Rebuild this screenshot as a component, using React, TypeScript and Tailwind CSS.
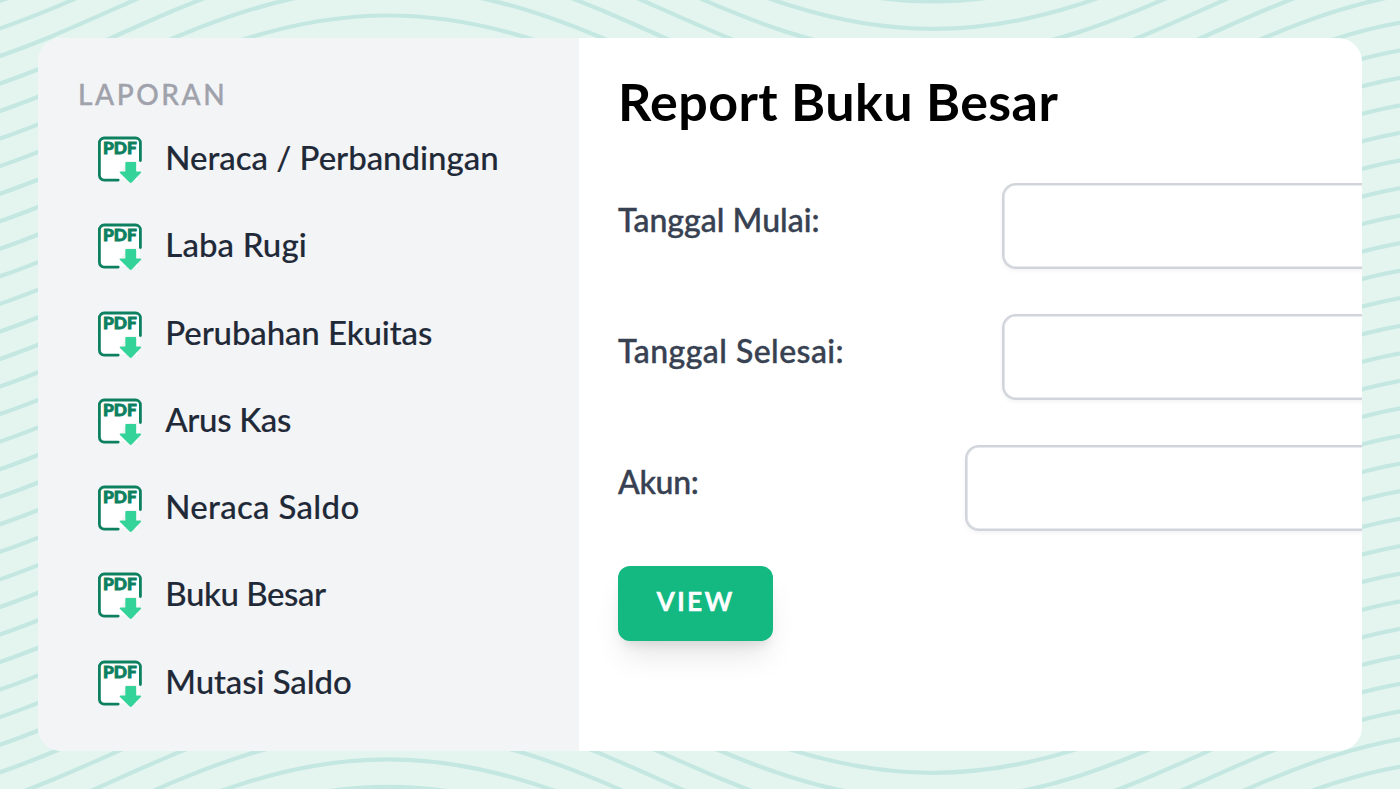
import React from 'react';

const LINE_GAP = 27.55;
const WAVE =
  'M-157 166.7 C50 166.7 181 15.5 388 15.5 S726 166.7 933 166.7 S1271 15.5 1478 15.5';

function Waves() {
  const rows = Array.from({ length: 36 }, (_, i) => i - 6);
  return (
    <svg
      className="absolute inset-0 h-full w-full"
      viewBox="0 0 1400 789"
      fill="none"
      stroke="#c4e8e1"
      strokeWidth="4.2"
      aria-hidden="true"
    >
      {rows.map((row) => (
        <path key={row} d={WAVE} transform={`translate(0 ${row * LINE_GAP})`} />
      ))}
    </svg>
  );
}

function PdfIcon() {
  return (
    <svg className="-mt-[0.8px] h-[50px] w-12 shrink-0" viewBox="0 0 48 50" fill="none" aria-hidden="true">
      <rect x="3.4" y="4" width="41" height="42" rx="5" fill="white" />
      <path d="M24.5 48V39L30 29V27H48V50H24.5Z" fill="#f3f4f6" />
      <path d="M24 45V37.5H29V28H44V34L41 46Z" fill="white" />
      <path
        d="M22.2 46.1H8.2a4.8 4.8 0 0 1-4.8-4.8V8.8A4.8 4.8 0 0 1 8.2 4H39.6a4.8 4.8 0 0 1 4.8 4.8V26.6"
        stroke="#0d8060"
        strokeWidth="2.8"
        strokeLinecap="round"
      />
      <text
        x="6.9"
        y="20.3"
        fill="#0d8060"
        stroke="#0d8060"
        strokeWidth="0.8"
        fontFamily="Lato, sans-serif"
        fontWeight="900"
        fontSize="16.2"
        textLength="33.8"
        lengthAdjust="spacingAndGlyphs"
      >
        PDF
      </text>
      <path
        d="M29.3 28.9Q29.3 28 30.2 28H39.3Q40.2 28 40.2 28.9V37.4H44.2Q46 37.6 44.8 39L35.7 48.5Q34.7 49.4 33.7 48.5L24 39Q22.8 37.6 24.6 37.4H29.3Z"
        fill="#34d399"
      />
    </svg>
  );
}

const reports = [
  { label: 'Neraca / Perbandingan', tracking: 'tracking-[-0.03px]' },
  { label: 'Laba Rugi', tracking: 'tracking-[0.1px]' },
  { label: 'Perubahan Ekuitas', tracking: 'tracking-[-0.13px]' },
  { label: 'Arus Kas', tracking: 'tracking-[-0.35px]' },
  { label: 'Neraca Saldo', tracking: 'tracking-[0.3px]' },
  { label: 'Buku Besar', tracking: 'tracking-[-0.45px]' },
  { label: 'Mutasi Saldo', tracking: 'tracking-[-0.1px]' },
];

const fields = [
  { label: 'Tanggal Mulai:', labelWidth: 'w-[384px]', tracking: 'tracking-[0.03px]' },
  { label: 'Tanggal Selesai:', labelWidth: 'w-[384px]', tracking: 'tracking-[0.45px]' },
  { label: 'Akun:', labelWidth: 'w-[347px]', tracking: 'tracking-[-0.3px]' },
];

export default function App() {
  return (
    <div className="relative h-[789px] w-[1400px] overflow-hidden bg-[#e4f5ef] p-[38px] font-['Lato','Liberation_Sans',sans-serif]">
      <Waves />
      <div className="relative flex h-[713px] w-[1324.4px] overflow-hidden rounded-[24px] bg-white">
        <aside className="w-[541px] shrink-0 bg-[#f3f4f6] pt-[38px]">
          <h2 className="pl-10 text-[28px] leading-9 font-medium tracking-[2.6px] text-[#9fa2ab] [-webkit-text-stroke:0.4px]">
            LAPORAN
          </h2>
          <ul className="pt-[5px] pl-[58px]">
            {reports.map(({ label, tracking }) => (
              <li key={label} className="flex h-[87.25px] items-start pt-[18px]">
                <PdfIcon />
                <span
                  className={`pl-[21.3px] text-[33px] leading-[44px] font-medium whitespace-nowrap text-[#1f2937] [-webkit-text-stroke:0.15px] ${tracking}`}
                >
                  {label}
                </span>
              </li>
            ))}
          </ul>
        </aside>
        <main className="flex-1 overflow-hidden pt-[32px] pl-[39px]">
          <h1 className="text-[52px] leading-[62px] font-bold tracking-[0.4px] whitespace-nowrap text-black">
            Report Buku Besar
          </h1>
          <form className="pt-[51px]">
            {fields.map(({ label, labelWidth, tracking }) => (
              <div key={label} className="flex h-[130.75px] items-start">
                <label
                  className={`shrink-0 pt-[17px] text-[32px] leading-10 font-medium whitespace-nowrap text-[#374151] [-webkit-text-stroke:0.4px] ${labelWidth} ${tracking}`}
                >
                  {label}
                </label>
                <div className="h-[86px] w-[600px] shrink-0 rounded-[14px] border-2 border-[#d1d5db] bg-white shadow-[inset_0_0_0_0.6px_#d1d5db,0_2px_4px_rgba(0,0,0,0.05)]" />
              </div>
            ))}
            <button
              type="button"
              className="-mt-[9px] flex h-[75px] w-[155px] items-center justify-center rounded-[12px] bg-[#14b982] pb-[3px] text-[26.5px] font-bold tracking-[2.2px] text-white shadow-[0_20px_30px_-6px_rgba(0,0,0,0.1),0_8px_12px_-5px_rgba(0,0,0,0.1)] [-webkit-text-stroke:0.3px]"
            >
              VIEW
            </button>
          </form>
        </main>
      </div>
    </div>
  );
}
